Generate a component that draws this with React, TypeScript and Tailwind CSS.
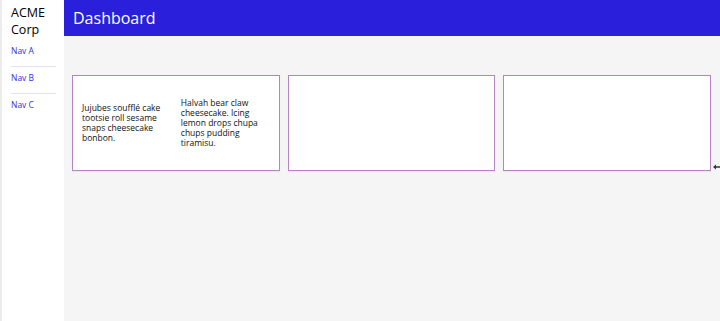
import React from 'react';

const cards = [
  {
    id: 1,
    cols: [
      'Jujubes soufflé cake tootsie roll sesame snaps cheesecake bonbon.',
      'Halvah bear claw cheesecake. Icing lemon drops chupa chups pudding tiramisu.',
    ],
  },
  { id: 2, cols: [] },
  { id: 3, cols: [] },
];

const navItems = ['Nav A', 'Nav B', 'Nav C'];

const App: React.FC = () => {
  return (
    <div
      className="relative flex h-[321px] w-[720px] overflow-hidden bg-[#f5f5f5] text-black"
      style={{ fontFamily: '"Open Sans", "Noto Sans", sans-serif' }}
    >
      {/* Sidebar */}
      <aside className="w-[64px] shrink-0 border-l-2 border-[#ececec] bg-white pl-[9px] pr-[8px]">
        <div className="pt-[4px] text-[12.5px] leading-[17px]">
          <span className="block">ACME</span>
          <span className="block">Corp</span>
        </div>
        <nav className="mt-[8px] flex flex-col">
          {navItems.map((item, i) => (
            <a
              key={item}
              href="#"
              className={`block text-[8.5px] leading-[10px] text-[#3a2fd8] ${
                i < navItems.length - 1 ? 'mb-[6px] border-b border-[#e3e0fa] pb-[10px]' : ''
              }`}
            >
              {item}
            </a>
          ))}
        </nav>
      </aside>

      {/* Main */}
      <div className="flex flex-1 flex-col">
        <header className="flex h-[36px] items-center bg-[#2a1fdb] pl-[9px]">
          <h1 className="text-[16px] font-medium text-white">Dashboard</h1>
        </header>
        <main className="grid grid-cols-3 gap-[8px] pl-[8px] pr-[9px] pt-[39px]">
          {cards.map(card => (
            <div
              key={card.id}
              className="flex h-[96px] items-center gap-[10px] border border-[#b585c4] bg-white px-[9px] shadow-[0_1px_1px_rgba(0,0,0,0.05)]"
            >
              {card.cols.map((text, i) => (
                <p key={i} className="w-[89px] text-[8.5px] leading-[10px] text-[#111]">
                  {text}
                </p>
              ))}
            </div>
          ))}
        </main>
      </div>

      {/* leftover cursor arrow at the right edge */}
      <svg className="absolute left-[713px] top-[164px]" width="7" height="6" viewBox="0 0 7 6">
        <path d="M0 3 L3 0.5 L3 2.2 L7 2.2 L7 3.8 L3 3.8 L3 5.5 Z" fill="#333" />
      </svg>
    </div>
  );
};

export default App;
